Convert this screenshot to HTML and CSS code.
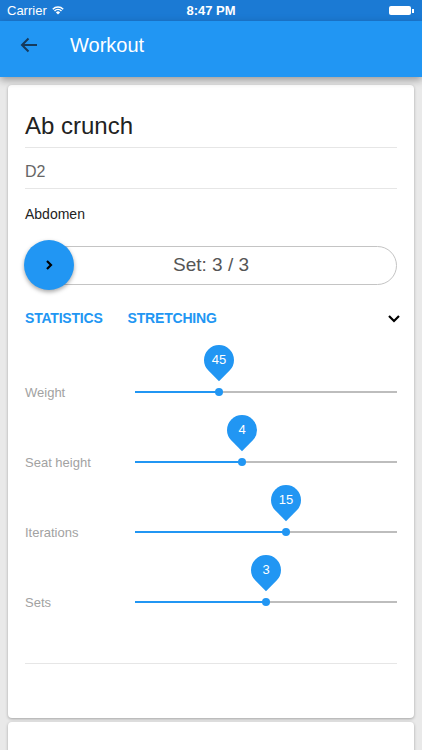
FILE: index.html
```html
<!DOCTYPE html>
<html lang="en">
<head>
    <meta charset="UTF-8">
    <meta name="viewport" content="width=device-width, initial-scale=1.0">
    <title>Workout</title>
    <link rel="stylesheet" href="styles.css">
</head>
<body>
    <div class="status-bar">
        <div class="carrier">
            Carrier
            <svg class="wifi" width="12" height="9" viewBox="0 0 12 9">
                <path d="M6 8.6 L3.9 6.4 A3 3 0 0 1 8.1 6.4 Z" fill="#fff"/>
                <path d="M2.5 5 A5 5 0 0 1 9.5 5" stroke="#fff" stroke-width="1.5" fill="none"/>
                <path d="M0.8 3.2 A7.4 7.4 0 0 1 11.2 3.2" stroke="#fff" stroke-width="1.5" fill="none"/>
            </svg>
        </div>
        <div class="clock">8:47 PM</div>
        <div class="battery"><span class="battery-body"></span><span class="battery-nub"></span></div>
    </div>

    <header class="app-bar">
        <svg class="back" width="18" height="16" viewBox="0 0 18 16">
            <path d="M17 8 H2 M8.5 1.5 L2 8 L8.5 14.5" stroke="currentColor" stroke-width="2" fill="none"/>
        </svg>
        <h1>Workout</h1>
    </header>

    <main class="content">
        <section class="card">
            <div class="exercise-name">Ab crunch</div>
            <div class="machine">D2</div>
            <div class="muscle">Abdomen</div>

            <div class="set-row">
                <div class="set-pill">Set: 3 / 3</div>
                <button class="next-set">
                    <svg width="8" height="12" viewBox="0 0 8 12">
                        <path d="M2 2 L6 6 L2 10" stroke="#000" stroke-width="2.2" fill="none"/>
                    </svg>
                </button>
            </div>

            <div class="tabs">
                <span class="tab">Statistics</span>
                <span class="tab">Stretching</span>
                <svg class="expand" width="14" height="9" viewBox="0 0 14 9">
                    <path d="M2 2 L7 7 L12 2" stroke="#000" stroke-width="2.2" fill="none"/>
                </svg>
            </div>

            <div class="settings" id="settings"></div>

            <div class="divider"></div>
        </section>

        <section class="card card-next"></section>
    </main>

    <script>
        // machine settings for this exercise
        const settings = [
            { label: "Weight", value: 45, pos: 32 },
            { label: "Seat height", value: 4, pos: 41 },
            { label: "Iterations", value: 15, pos: 57.5 },
            { label: "Sets", value: 3, pos: 50 }
        ];

        const list = document.getElementById("settings");
        settings.forEach(s => {
            const row = document.createElement("div");
            row.className = "setting";
            row.innerHTML = `
                <div class="setting-label">${s.label}</div>
                <div class="track">
                    <div class="track-fill" style="width: ${s.pos}%"></div>
                    <div class="thumb" style="left: ${s.pos}%">
                        <div class="pin"><span>${s.value}</span></div>
                    </div>
                </div>
            `;
            list.appendChild(row);
        });
    </script>
</body>
</html>
```

FILE: styles.css
```css
* {
    box-sizing: border-box;
    margin: 0;
    padding: 0;
}

body {
    background: #e9e9e9;
    font-family: "Liberation Sans", Arial, sans-serif;
    color: #222;
    overflow: hidden;
    height: 750px;
}

.status-bar {
    height: 21px;
    background: #1b7ad4;
    color: #fff;
    display: flex;
    align-items: center;
    justify-content: space-between;
    padding: 0 8px 0 7px;
    font-size: 13px;
    position: relative;
}

.carrier {
    display: flex;
    align-items: center;
    gap: 5px;
}

.clock {
    position: absolute;
    left: 0;
    right: 0;
    text-align: center;
    font-weight: bold;
    pointer-events: none;
}

.battery {
    display: flex;
    align-items: center;
}

.battery-body {
    width: 22px;
    height: 9px;
    background: #fff;
    border-radius: 2px;
}

.battery-nub {
    width: 2px;
    height: 4px;
    background: #fff;
    margin-left: 1px;
}

.app-bar {
    height: 56px;
    background: #2196f3;
    display: flex;
    align-items: flex-start;
    padding: 12px 0 0 20px;
    box-shadow: 0 3px 8px rgba(0, 0, 0, 0.35);
    position: relative;
    z-index: 1;
}

.back {
    color: #163a5c;
    margin-top: 4px;
}

.app-bar h1 {
    font-size: 20px;
    line-height: 24px;
    font-weight: normal;
    color: #fff;
    margin-left: 32px;
}

.content {
    padding: 8px 8px 0;
}

.card {
    background: #fff;
    border-radius: 4px;
    box-shadow: 0 1px 3px rgba(0, 0, 0, 0.3);
    padding: 0 17px;
    height: 633px;
}

.card-next {
    margin-top: 4px;
    height: 60px;
}

.exercise-name {
    font-size: 24px;
    line-height: 30px;
    padding: 26px 0 6px;
    border-bottom: 1px solid #e6e6e6;
}

.machine {
    font-size: 16px;
    height: 41px;
    line-height: 35px;
    padding-top: 6px;
    color: #666;
    border-bottom: 1px solid #e6e6e6;
}

.muscle {
    font-size: 14px;
    height: 51px;
    line-height: 51px;
    color: #222;
}

.set-row {
    height: 50px;
    position: relative;
    display: flex;
    align-items: center;
}

.set-pill {
    width: 100%;
    height: 39px;
    border: 1px solid #c4c4c4;
    border-radius: 20px;
    display: flex;
    align-items: center;
    justify-content: center;
    font-size: 19px;
    color: #555;
}

.next-set {
    position: absolute;
    left: -1px;
    top: 0;
    width: 50px;
    height: 50px;
    border-radius: 50%;
    border: none;
    background: #2196f3;
    box-shadow: 0 2px 4px rgba(0, 0, 0, 0.35);
    display: flex;
    align-items: center;
    justify-content: center;
}

.tabs {
    height: 56px;
    display: flex;
    align-items: center;
}

.tab {
    color: #2196f3;
    font-size: 14px;
    font-weight: bold;
    text-transform: uppercase;
    margin-right: 25px;
    letter-spacing: -0.2px;
}

.expand {
    margin-left: auto;
    margin-right: -4px;
}

.settings {
    padding-top: 11px;
}

.setting {
    height: 70px;
    display: flex;
    align-items: center;
}

.setting-label {
    width: 110px;
    font-size: 13px;
    color: #a2a2a2;
}

.track {
    flex: 1;
    height: 2px;
    background: #bdbdbd;
    position: relative;
}

.track-fill {
    height: 100%;
    background: #2196f3;
}

.thumb {
    position: absolute;
    top: -3px;
    width: 8px;
    height: 8px;
    margin-left: -4px;
    border-radius: 50%;
    background: #2196f3;
}

/* value bubble: a rotated rounded square, point down, above the thumb */
.pin {
    position: absolute;
    left: 50%;
    top: -43px;
    width: 30px;
    height: 30px;
    margin-left: -15px;
    background: #2196f3;
    border-radius: 50% 50% 50% 0;
    transform: rotate(-45deg);
}

.pin span {
    display: block;
    transform: rotate(45deg);
    color: #fff;
    font-size: 13px;
    line-height: 30px;
    text-align: center;
}

.divider {
    margin-top: 26px;
    height: 1px;
    background: #e6e6e6;
}
```
